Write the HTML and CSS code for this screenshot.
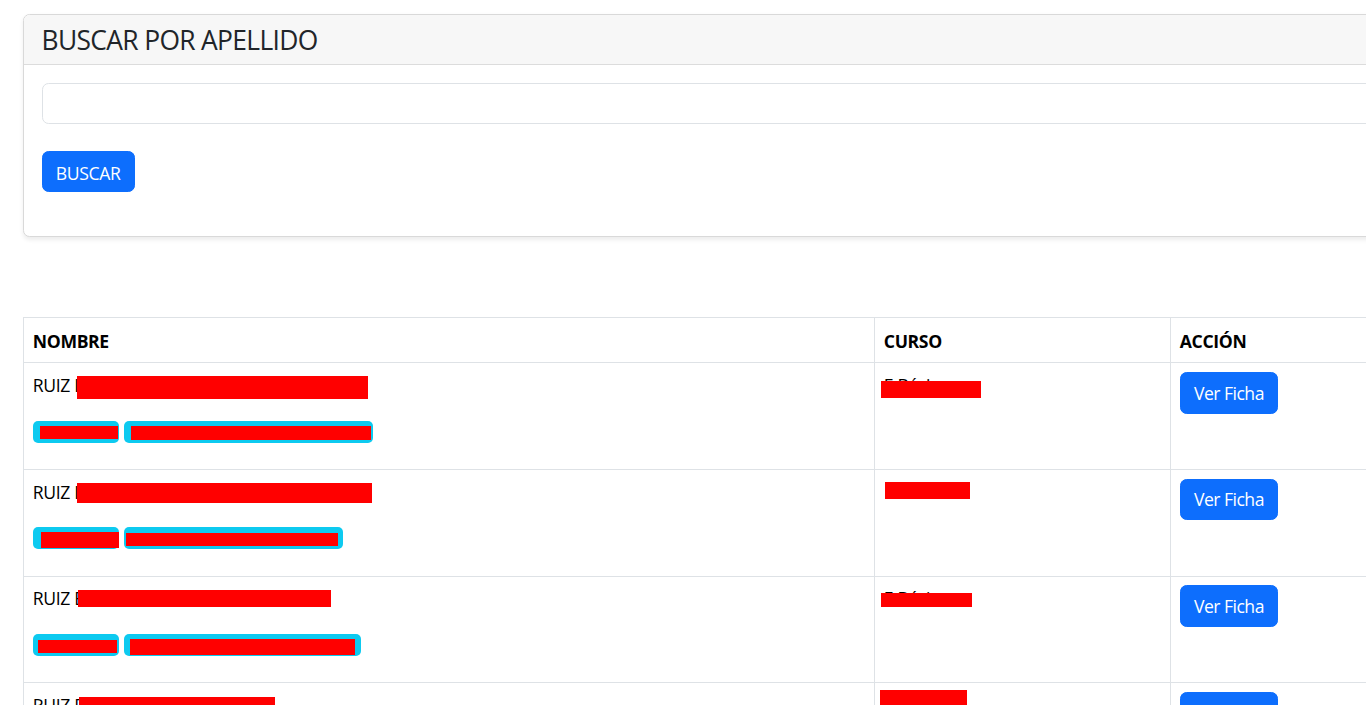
FILE: index.html
```html
<!DOCTYPE html>
<html lang="es">
<head>
<meta charset="utf-8">
<title>Buscar por apellido</title>
<link rel="stylesheet" href="styles.css">
</head>
<body>
<main class="page">
  <section class="card">
    <header class="card-header"><h4>BUSCAR POR APELLIDO</h4></header>
    <form class="card-body">
      <input class="form-control" type="text" aria-label="Apellido">
      <button class="btn" type="button">BUSCAR</button>
    </form>
  </section>

  <table class="results">
    <colgroup><col class="c-name"><col class="c-curso"><col class="c-acc"></colgroup>
    <thead>
      <tr><th>NOMBRE</th><th>CURSO</th><th>ACCIÓN</th></tr>
    </thead>
    <tbody>
      <tr>
        <td>
          <p class="name">RUIZ I<span class="redact" style="width:291px;height:23px;margin:4px 0 -10px -2px"></span></p>
          <div class="badges">
            <span class="badge" style="width:86px"><span class="redact" style="width:78px;height:13px;margin:5px 0 0 7px"></span></span>
            <span class="badge" style="width:249px"><span class="redact" style="width:240px;height:14px;margin:5px 0 0 7px"></span></span>
          </div>
        </td>
        <td><p class="curso">E.Básica<span class="redact" style="width:100px;height:17px;margin:9px 0 -10px -67px"></span></p></td>
        <td><a class="btn" href="#">Ver Ficha</a></td>
      </tr>
      <tr>
        <td>
          <p class="name">RUIZ I<span class="redact" style="width:295px;height:20px;margin:4px 0 -10px -2px"></span></p>
          <div class="badges">
            <span class="badge" style="width:86px"><span class="redact" style="width:78px;height:16px;margin:5px 0 0 8px"></span></span>
            <span class="badge" style="width:219px"><span class="redact" style="width:212px;height:13px;margin:6px 0 0 2px"></span></span>
          </div>
        </td>
        <td><p class="curso"><span class="redact" style="width:85px;height:17px;margin:3px 0 -10px 1px"></span></p></td>
        <td><a class="btn" href="#">Ver Ficha</a></td>
      </tr>
      <tr>
        <td>
          <p class="name">RUIZ E<span class="redact" style="width:253px;height:17px;margin:5px 0 -10px -6px"></span></p>
          <div class="badges">
            <span class="badge" style="width:86px"><span class="redact" style="width:79px;height:13px;margin:6px 0 0 5px"></span></span>
            <span class="badge" style="width:237px"><span class="redact" style="width:225px;height:16px;margin:5px 0 0 6px"></span></span>
          </div>
        </td>
        <td><p class="curso">E.Básica<span class="redact" style="width:91px;height:14px;margin:8px 0 -10px -67px"></span></p></td>
        <td><a class="btn" href="#">Ver Ficha</a></td>
      </tr>
      <tr>
        <td>
          <p class="name">RUIZ E<span class="redact" style="width:196px;height:20px;margin:5px 0 -10px -5px"></span></p>
          <div class="badges">
            <span class="badge" style="width:86px"><span class="redact" style="width:78px;height:13px;margin:5px 0 0 7px"></span></span>
            <span class="badge" style="width:220px"><span class="redact" style="width:210px;height:14px;margin:5px 0 0 6px"></span></span>
          </div>
        </td>
        <td><p class="curso"><span class="redact" style="width:87px;height:20px;margin:-2px 0 -10px -4px"></span></p></td>
        <td><a class="btn" href="#">Ver Ficha</a></td>
      </tr>
    </tbody>
  </table>
</main>
</body>
</html>
```

FILE: styles.css
```css
html {
  overflow: hidden;
}

body {
  margin: 0;
  font-family: "Open Sans", "Noto Sans", "Liberation Sans", sans-serif;
  font-size: 17.6px;
  line-height: 1.5;
  color: #212529;
  background: #fff;
}

.page {
  padding: 14px 0 0 23px;
  width: 1420px;
}

.card {
  width: 1420px;
  box-sizing: border-box;
  border: 1px solid #d9d9d9;
  border-radius: 6.6px;
  box-shadow: 0 2.2px 4.4px rgba(0, 0, 0, 0.075);
  background: #fff;
}

.card-header {
  background: #f7f7f7;
  padding: 10.4px 17.6px 7.2px;
  border-bottom: 1px solid #dcdcdc;
  border-radius: 5.6px 5.6px 0 0;
}

.card-header h4 {
  margin: 0;
  font-size: 26.4px;
  font-weight: 400;
  line-height: 1.2;
  letter-spacing: -0.025em;
  color: #212529;
}

.card-body {
  padding: 17.6px;
  display: flex;
  flex-direction: column;
  align-items: stretch;
  margin: 0;
}

.form-control {
  display: block;
  box-sizing: border-box;
  width: 100%;
  height: 41.6px;
  padding: 6.6px 13.2px;
  font: inherit;
  border: 1px solid #dee2e6;
  border-radius: 6.6px;
  background: #fff;
  outline: none;
}

.btn {
  display: inline-block;
  box-sizing: border-box;
  height: 41.6px;
  padding: 6.6px 13.2px;
  font-family: inherit;
  font-size: 17.6px;
  line-height: 26.4px;
  font-weight: 400;
  letter-spacing: -0.03em;
  color: #fff;
  background: #0d6efd;
  border: 1px solid #0d6efd;
  border-radius: 6.6px;
  text-decoration: none;
  vertical-align: top;
  cursor: pointer;
}

.card-body .btn {
  align-self: flex-start;
  padding-top: 8.6px;
  padding-bottom: 4.6px;
  letter-spacing: -0.02em;
  margin: 26.4px 0 26.4px;
}

.results {
  margin-top: 80px;
  width: 1420px;
  border-collapse: collapse;
  table-layout: fixed;
  color: #000;
}

.c-name { width: 851px; }
.c-curso { width: 296px; }

.results th,
.results td {
  padding: 8.8px;
  border: 1px solid #dee2e6;
  text-align: left;
  vertical-align: top;
  line-height: 26.4px;
  letter-spacing: -0.02em;
}

.results th {
  font-weight: 700;
  padding-top: 9.8px;
  padding-bottom: 7.8px;
}

.name,
.curso {
  margin: 0;
  height: 26.4px;
  white-space: nowrap;
}

.name {
  margin-bottom: 17.6px;
}

.badges {
  display: flex;
  align-items: flex-end;
  gap: 5px;
  height: 26.4px;
  margin-bottom: 17.6px;
}

.badge {
  display: flex;
  align-items: flex-start;
  box-sizing: border-box;
  height: 22px;
  border-radius: 5px;
  background: #0dcaf0;
}

.redact {
  display: inline-block;
  vertical-align: top;
  background: #ff0000;
  flex: none;
}
```
